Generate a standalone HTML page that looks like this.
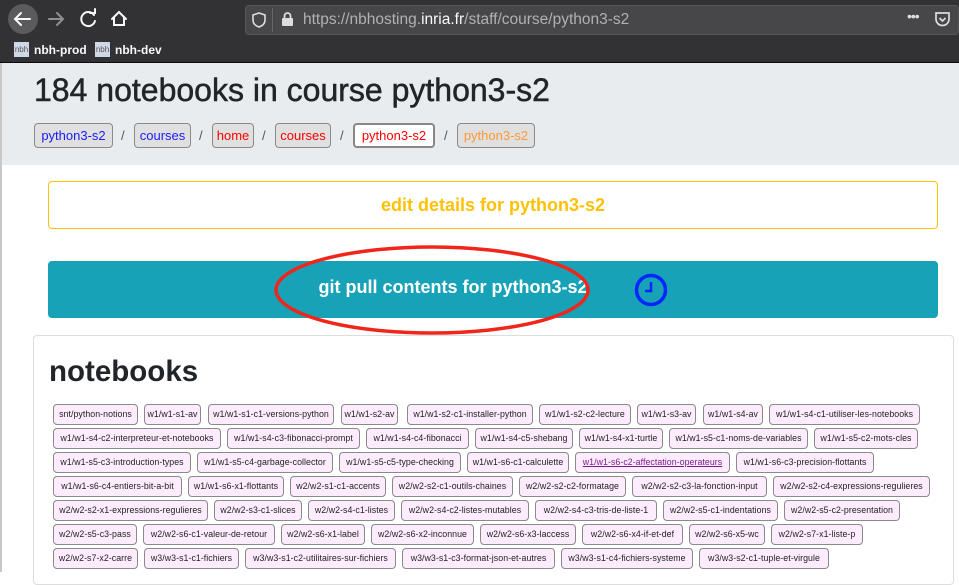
<!DOCTYPE html>
<html><head><meta charset="utf-8">
<style>
*{box-sizing:border-box;margin:0;padding:0}
body{width:959px;height:572px;overflow:hidden;background:#fff;font-family:"Liberation Sans",sans-serif;position:relative}
.abs{position:absolute}
#chrome{left:0;top:0;width:959px;height:63px;background:#323234;border-bottom:1px solid #0c0c0d}
.url{left:245px;top:5px;width:714px;height:30px;background:#474749;border-radius:4px;border:1px solid #555}
.bm{color:#f9f9fa;font-size:12px;font-weight:bold}
.fav{width:15px;height:15px;background:#cfd8e6;color:#555;font-size:8px;line-height:15px;text-align:center;font-weight:normal}
#hdr{left:2px;top:63px;width:957px;height:102px;background:#e9ecef}
h1{position:absolute;left:34px;top:72px;font-size:32px;font-weight:normal;color:#212529;-webkit-text-stroke:0.5px #212529}
.bc{position:absolute;top:123px;height:25px;border:1px solid #8a8a8a;border-radius:4px;background:#e0e0e0;font-size:13px;line-height:23px;text-align:center}
.sl{position:absolute;top:128px;font-size:13px;color:#555}
.t{position:absolute;height:21px;border:1px solid #8a8a8a;border-radius:4px;background:#fdecfd;font-size:8.8px;line-height:19px;text-align:center;color:#222;white-space:nowrap;letter-spacing:0.05px;font-family:"Liberation Sans",sans-serif}
</style></head><body>
<div id="chrome" class="abs"></div>
<div class="abs" style="left:8px;top:4px;width:30px;height:30px;border-radius:50%;background:#5b5b5d"></div>
<svg class="abs" style="left:0;top:0" width="240" height="40"><g stroke="#f9f9fa" stroke-width="2" fill="none" stroke-linecap="round"><path d="M30 19H15M21 13l-6 6 6 6"/><path d="M63 19H49M57 13l6 6-6 6" stroke="#8f8f90"/><path d="M94 15a7 7 0 1 0 1 6"/><path d="M90 13h5v-4"/><path d="M112 19l7-7 7 7M114 17v8h10v-8"/></g></svg>
<div class="abs url"></div>
<svg class="abs" style="left:250px;top:10px" width="40" height="20"><path d="M6 3l6 2v5c0 4-3 6-6 7-3-1-6-3-6-7V5z" transform="translate(3,0)" fill="none" stroke="#ddd" stroke-width="1.6"/></svg>
<div class="abs" style="left:272px;top:8px;width:1px;height:24px;background:#666"></div>
<svg class="abs" style="left:280px;top:11px" width="16" height="16"><rect x="2" y="7" width="11" height="8" rx="1" fill="#ddd"/><path d="M4.5 7V5a3 3 0 0 1 6 0v2" stroke="#ddd" stroke-width="1.8" fill="none"/></svg>
<div class="abs" style="left:303px;top:11px;font-size:15.5px;color:#b1b1b3">https://nbhosting.<span style="color:#f9f9fa">inria.fr</span>/staff/course/python3-s2</div>
<div class="abs" style="left:907px;top:8px;color:#ddd;font-size:14px;letter-spacing:-1px">•••</div>
<svg class="abs" style="left:934px;top:11px" width="18" height="18"><path d="M2 2h13v6a6.5 6.5 0 0 1-13 0z" fill="none" stroke="#ddd" stroke-width="1.7"/><path d="M5.5 7l3 3 3-3" fill="none" stroke="#ddd" stroke-width="1.7"/></svg>
<div class="abs fav" style="left:14px;top:42px">nbh</div><div class="abs bm" style="left:34px;top:43px">nbh-prod</div>
<div class="abs fav" style="left:95px;top:42px">nbh</div><div class="abs bm" style="left:115px;top:43px">nbh-dev</div>
<div id="hdr" class="abs"></div>
<div class="abs" style="left:0;top:63px;width:2px;height:509px;background:#c8c8c8"></div>
<h1>184 notebooks in course python3-s2</h1>
<div class="bc" style="left:34px;width:79px;color:#1a1aff">python3-s2</div><div class="sl" style="left:121px">/</div>
<div class="bc" style="left:134px;width:57px;color:#1a1aff">courses</div><div class="sl" style="left:199px">/</div>
<div class="bc" style="left:212px;width:42px;color:#f00">home</div><div class="sl" style="left:262px">/</div>
<div class="bc" style="left:275px;width:56px;color:#f00">courses</div><div class="sl" style="left:340px">/</div>
<div class="bc" style="left:353px;width:82px;background:#fff;border:2px solid #888;color:#f00;line-height:21px">python3-s2</div><div class="sl" style="left:444px">/</div>
<div class="bc" style="left:457px;width:78px;color:#ff9933">python3-s2</div>
<div class="abs" style="left:48px;top:181px;width:890px;height:48px;border:1px solid #ffc107;border-radius:4px;color:#ffc107;font-size:18px;font-weight:bold;text-align:center;line-height:46px">edit details for python3-s2</div>
<div class="abs" style="left:48px;top:261px;width:890px;height:57px;background:#17a2b8;border-radius:4px"></div>
<div class="abs" style="left:293px;top:277px;width:320px;font-size:18px;font-weight:bold;color:#fff;text-align:center">git pull contents for python3-s2</div>
<svg class="abs" style="left:0;top:0" width="959" height="572"><ellipse cx="432" cy="290" rx="156" ry="43" fill="none" stroke="#f0261a" stroke-width="3.5"/><circle cx="651" cy="290" r="14.5" fill="none" stroke="#0026ff" stroke-width="3.5"/><path d="M651 282v9h-6" fill="none" stroke="#0026ff" stroke-width="2.5"/></svg>
<div class="abs" style="left:33px;top:335px;width:921px;height:250px;border:1px solid #ddd;border-radius:4px"></div>
<div class="abs" style="left:49px;top:355px;font-size:29.5px;font-weight:bold;color:#212529">notebooks</div>
<div class="t" style="left:53px;top:404px;width:85px">snt/python-notions</div>
<div class="t" style="left:144px;top:404px;width:57px">w1/w1-s1-av</div>
<div class="t" style="left:208px;top:404px;width:126px">w1/w1-s1-c1-versions-python</div>
<div class="t" style="left:341px;top:404px;width:57px">w1/w1-s2-av</div>
<div class="t" style="left:407px;top:404px;width:126px">w1/w1-s2-c1-installer-python</div>
<div class="t" style="left:539px;top:404px;width:92px">w1/w1-s2-c2-lecture</div>
<div class="t" style="left:637px;top:404px;width:59px">w1/w1-s3-av</div>
<div class="t" style="left:703px;top:404px;width:60px">w1/w1-s4-av</div>
<div class="t" style="left:769px;top:404px;width:151px">w1/w1-s4-c1-utiliser-les-notebooks</div>
<div class="t" style="left:53px;top:428px;width:168px">w1/w1-s4-c2-interpreteur-et-notebooks</div>
<div class="t" style="left:227px;top:428px;width:133px">w1/w1-s4-c3-fibonacci-prompt</div>
<div class="t" style="left:366px;top:428px;width:103px">w1/w1-s4-c4-fibonacci</div>
<div class="t" style="left:475px;top:428px;width:98px">w1/w1-s4-c5-shebang</div>
<div class="t" style="left:579px;top:428px;width:84px">w1/w1-s4-x1-turtle</div>
<div class="t" style="left:669px;top:428px;width:139px">w1/w1-s5-c1-noms-de-variables</div>
<div class="t" style="left:814px;top:428px;width:104px">w1/w1-s5-c2-mots-cles</div>
<div class="t" style="left:53px;top:452px;width:138px">w1/w1-s5-c3-introduction-types</div>
<div class="t" style="left:197px;top:452px;width:136px">w1/w1-s5-c4-garbage-collector</div>
<div class="t" style="left:339px;top:452px;width:122px">w1/w1-s5-c5-type-checking</div>
<div class="t" style="left:467px;top:452px;width:102px">w1/w1-s6-c1-calculette</div>
<div class="t" style="left:575px;top:452px;width:155px;color:#7a1a8a;text-decoration:underline">w1/w1-s6-c2-affectation-operateurs</div>
<div class="t" style="left:736px;top:452px;width:138px">w1/w1-s6-c3-precision-flottants</div>
<div class="t" style="left:53px;top:476px;width:129px">w1/w1-s6-c4-entiers-bit-a-bit</div>
<div class="t" style="left:188px;top:476px;width:96px">w1/w1-s6-x1-flottants</div>
<div class="t" style="left:290px;top:476px;width:96px">w2/w2-s1-c1-accents</div>
<div class="t" style="left:392px;top:476px;width:121px">w2/w2-s2-c1-outils-chaines</div>
<div class="t" style="left:519px;top:476px;width:107px">w2/w2-s2-c2-formatage</div>
<div class="t" style="left:632px;top:476px;width:135px">w2/w2-s2-c3-la-fonction-input</div>
<div class="t" style="left:773px;top:476px;width:157px">w2/w2-s2-c4-expressions-regulieres</div>
<div class="t" style="left:53px;top:500px;width:155px">w2/w2-s2-x1-expressions-regulieres</div>
<div class="t" style="left:214px;top:500px;width:88px">w2/w2-s3-c1-slices</div>
<div class="t" style="left:308px;top:500px;width:87px">w2/w2-s4-c1-listes</div>
<div class="t" style="left:401px;top:500px;width:128px">w2/w2-s4-c2-listes-mutables</div>
<div class="t" style="left:535px;top:500px;width:122px">w2/w2-s4-c3-tris-de-liste-1</div>
<div class="t" style="left:663px;top:500px;width:115px">w2/w2-s5-c1-indentations</div>
<div class="t" style="left:784px;top:500px;width:116px">w2/w2-s5-c2-presentation</div>
<div class="t" style="left:53px;top:524px;width:84px">w2/w2-s5-c3-pass</div>
<div class="t" style="left:143px;top:524px;width:132px">w2/w2-s6-c1-valeur-de-retour</div>
<div class="t" style="left:281px;top:524px;width:84px">w2/w2-s6-x1-label</div>
<div class="t" style="left:371px;top:524px;width:103px">w2/w2-s6-x2-inconnue</div>
<div class="t" style="left:480px;top:524px;width:96px">w2/w2-s6-x3-laccess</div>
<div class="t" style="left:582px;top:524px;width:101px">w2/w2-s6-x4-if-et-def</div>
<div class="t" style="left:689px;top:524px;width:76px">w2/w2-s6-x5-wc</div>
<div class="t" style="left:771px;top:524px;width:92px">w2/w2-s7-x1-liste-p</div>
<div class="t" style="left:53px;top:548px;width:85px">w2/w2-s7-x2-carre</div>
<div class="t" style="left:144px;top:548px;width:95px">w3/w3-s1-c1-fichiers</div>
<div class="t" style="left:245px;top:548px;width:151px">w3/w3-s1-c2-utilitaires-sur-fichiers</div>
<div class="t" style="left:402px;top:548px;width:153px">w3/w3-s1-c3-format-json-et-autres</div>
<div class="t" style="left:561px;top:548px;width:132px">w3/w3-s1-c4-fichiers-systeme</div>
<div class="t" style="left:699px;top:548px;width:130px">w3/w3-s2-c1-tuple-et-virgule</div>
</body></html>
